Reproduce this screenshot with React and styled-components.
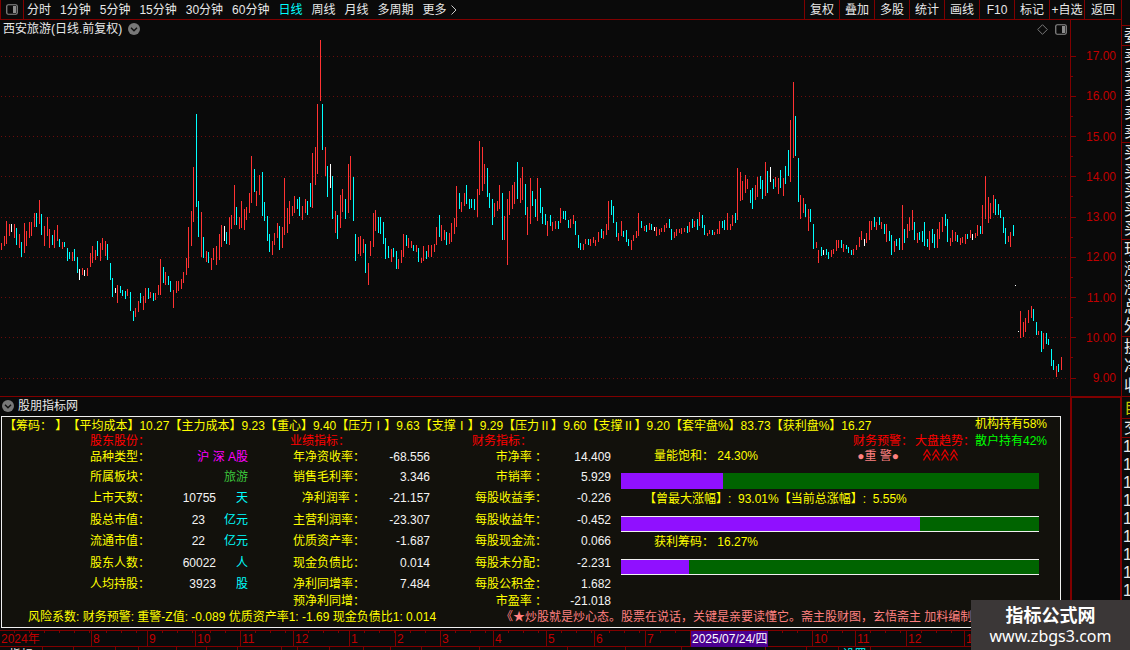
import styled, { createGlobalStyle } from "styled-components";

const GlobalStyle = createGlobalStyle`
  :root {
    --line: #800000;
    --bg: #0a0a0a;
    --up: #ff3232;
    --down: #00ffff;
    --label: #ffff00;
    --text: #e8e8e8;
  }

  * {
    box-sizing: border-box;
  }

  body {
    margin: 0;
    background: var(--bg);
    color: var(--text);
    font: 12px/16px "Liberation Sans", "Noto Sans CJK SC", sans-serif;
  }

  button {
    padding: 0;
    border: 0;
    background: none;
    color: inherit;
    font: inherit;
    white-space: nowrap;
    cursor: pointer;
  }
`;

const periods = ["分时", "1分钟", "5分钟", "15分钟", "30分钟", "60分钟", "日线", "周线", "月线", "多周期"];
const tools = ["复权", "叠加", "多股", "统计", "画线", "F10", "标记", "+自选", "返回"];

// x, high, low for every bar, grouped by colour
const upBars = [
  [1,243,250],[4,236,246],[6,221,244],[9,224,236],[14,224,238],[19,234,248],[24,223,253],[26,231,246],
  [29,222,238],[31,222,236],[34,213,227],[39,200,224],[44,226,246],[47,217,236],[49,229,248],[54,230,248],
  [57,225,241],[62,242,249],[72,252,261],[82,268,275],[87,268,276],[90,253,267],[92,246,263],[95,250,260],
  [100,243,261],[102,238,250],[105,241,256],[117,285,303],[127,289,296],[135,308,317],[138,301,312],
  [143,296,310],[145,288,303],[150,292,298],[155,293,300],[158,285,295],[160,259,295],[165,272,285],
  [173,290,308],[176,281,293],[178,281,291],[181,279,289],[183,272,283],[186,258,275],[188,227,268],
  [191,211,246],[193,167,222],[201,212,257],[206,251,262],[211,258,270],[213,248,260],[216,246,265],
  [219,234,260],[221,225,247],[229,217,245],[231,215,229],[234,185,225],[239,217,229],[241,201,228],
  [244,209,230],[246,207,220],[249,193,213],[251,156,203],[256,191,206],[259,175,195],[272,241,255],
  [274,233,245],[277,223,238],[282,227,248],[284,178,235],[287,208,233],[289,201,224],[292,206,216],
  [294,196,213],[302,206,220],[305,199,213],[312,153,208],[315,147,185],[317,104,174],[320,40,101],
  [325,147,176],[335,211,233],[340,195,228],[342,189,212],[348,164,213],[350,156,200],[358,237,254],
  [360,236,256],[363,239,253],[368,263,285],[370,241,256],[373,213,247],[375,210,231],[391,249,262],
  [398,259,269],[401,250,263],[403,234,257],[408,238,248],[411,241,248],[416,245,252],[421,258,263],
  [423,246,261],[428,245,257],[431,245,257],[434,244,252],[436,227,245],[441,225,241],[444,230,240],
  [449,233,244],[451,223,242],[454,218,234],[456,186,227],[461,202,212],[464,193,206],[477,189,217],
  [479,141,195],[482,147,191],[484,164,184],[494,203,217],[497,201,211],[499,185,209],[504,216,240],
  [507,199,265],[509,191,215],[512,185,209],[514,182,204],[520,178,203],[522,167,200],[527,207,235],
  [530,178,224],[537,178,221],[547,221,236],[552,222,231],[555,221,229],[560,208,223],[570,219,228],
  [573,215,224],[583,244,250],[585,239,244],[590,239,246],[593,237,243],[595,240,246],[598,232,242],
  [603,231,239],[606,224,235],[608,201,230],[618,233,241],[621,221,236],[631,240,250],[633,235,241],
  [636,231,238],[638,213,236],[644,226,231],[649,223,230],[656,227,236],[659,229,235],[661,228,232],
  [664,225,232],[666,223,228],[674,232,238],[676,229,236],[679,229,233],[681,228,234],[684,228,232],
  [689,222,232],[694,221,227],[699,212,226],[707,233,236],[709,230,234],[714,232,235],[717,229,234],
  [719,221,234],[727,213,230],[730,224,230],[732,215,226],[737,168,220],[740,172,201],[742,181,200],
  [745,175,193],[747,179,189],[755,185,200],[757,177,197],[765,162,196],[775,177,187],[778,178,194],
  [783,178,196],[790,120,182],[793,82,158],[800,195,219],[803,198,213],[808,209,231],[816,242,248],
  [818,250,263],[831,250,257],[833,249,254],[836,240,251],[838,240,248],[843,244,252],[853,249,255],
  [856,245,250],[859,237,247],[861,231,240],[866,233,243],[869,221,240],[871,221,230],[876,222,230],
  [881,222,229],[886,224,242],[894,241,252],[902,205,250],[907,224,238],[909,217,231],[912,210,230],
  [917,233,243],[929,231,250],[937,229,248],[939,222,239],[942,217,232],[950,238,246],[952,230,242],
  [955,232,241],[960,238,245],[962,237,243],[965,234,244],[970,230,238],[975,233,238],[977,225,236],
  [982,205,234],[985,176,219],[988,197,223],[990,203,219],[993,195,213],[1008,236,242],[1010,232,247],
  [1020,311,338],[1023,322,337],[1025,318,332],[1028,310,323],[1031,306,318],[1038,331,335],[1043,333,349],
  [1056,366,377],[1061,357,370],
];

const downBars = [
  [16,228,245],[21,242,257],[36,213,227],[41,214,235],[52,235,245],[59,239,247],[64,242,247],[67,248,261],
  [69,252,259],[74,249,261],[77,257,273],[97,241,256],[107,244,260],[110,263,280],[112,278,297],
  [120,286,293],[122,290,296],[125,291,299],[130,292,311],[133,311,321],[140,293,303],[148,288,299],
  [153,293,301],[163,267,283],[168,276,285],[170,281,292],[196,114,207],[198,201,237],[203,237,258],
  [208,252,263],[226,232,244],[236,207,225],[254,169,192],[262,172,216],[264,202,221],[267,216,241],
  [269,234,252],[279,226,250],[297,199,209],[299,197,216],[307,201,215],[310,183,207],[322,104,150],
  [327,166,197],[332,176,219],[337,215,239],[345,199,219],[353,177,221],[355,234,261],[365,244,273],
  [378,217,233],[380,217,234],[383,222,244],[385,238,259],[388,246,258],[393,248,257],[396,251,269],
  [406,235,246],[413,245,251],[418,248,262],[426,251,259],[439,215,237],[446,232,245],[459,193,209],
  [466,185,204],[469,199,209],[471,199,208],[474,199,210],[487,168,197],[489,193,208],[492,199,225],
  [502,193,240],[517,162,199],[525,184,215],[532,191,206],[535,199,217],[540,188,213],[542,207,224],
  [545,214,225],[550,215,226],[558,221,229],[563,211,219],[565,211,220],[568,220,228],[575,221,235],
  [578,235,248],[580,243,250],[588,239,245],[601,229,238],[611,200,215],[613,206,223],[616,222,237],
  [623,231,237],[626,230,242],[628,239,246],[641,221,228],[646,225,232],[651,224,230],[669,219,228],
  [671,229,240],[687,226,233],[692,219,228],[697,219,230],[702,215,228],[704,225,235],[712,230,235],
  [722,221,228],[724,220,230],[735,213,223],[750,190,203],[752,188,209],[760,176,189],[762,180,199],
  [767,171,193],[773,179,189],[780,170,188],[785,166,184],[788,150,176],[795,116,156],[798,158,202],
  [805,204,217],[810,209,222],[813,224,249],[821,247,256],[826,249,255],[828,252,259],[841,240,248],
  [846,245,249],[848,247,253],[851,250,255],[874,217,227],[879,217,225],[884,224,234],[889,231,241],
  [891,235,255],[896,239,246],[899,238,250],[904,229,243],[914,222,240],[919,232,240],[922,231,242],
  [924,222,246],[927,239,247],[932,229,243],[934,234,248],[945,214,226],[947,219,242],[957,235,242],
  [967,234,239],[980,226,234],[995,199,215],[998,204,215],[1000,210,218],[1003,217,233],[1005,228,244],
  [1013,225,236],[1033,309,321],[1036,322,335],[1041,331,352],[1046,333,344],[1048,339,345],[1051,349,366],
  [1053,360,370],[1058,364,372],
];

const flatBars = [
  [11,224,232],[79,269,280],[84,270,276],[115,288,293],[224,226,241],[330,164,188],[654,227,231],
  [770,167,182],[823,250,255],[864,239,246],[972,234,240],[1015,285,286],[1018,331,332],
];

const gridLines = [56, 96, 136, 176, 217, 257, 297, 337, 378];
const prices = ["17.00", "16.00", "15.00", "14.00", "13.00", "12.00", "11.00", "10.00", "9.00"];

const costs = [
  ["筹码： ", ""],
  ["平均成本", "10.27"],
  ["主力成本", "9.23"],
  ["重心", "9.40"],
  ["压力Ⅰ", "9.63"],
  ["支撑Ⅰ", "9.29"],
  ["压力Ⅱ", "9.60"],
  ["支撑Ⅱ", "9.20"],
  ["套牢盘%", "83.73"],
  ["获利盘%", "16.27"],
];

const rows = [
  { name: "品种类型：", word: "沪 深 A股", tone: "#ff00ff", perf: ["年净资收率：", "-68.556"], fin: ["市净率 ：", "14.409"] },
  { name: "所属板块：", word: "旅游", tone: "#3cc83c", perf: ["销售毛利率：", "3.346"], fin: ["市销率 ：", "5.929"] },
  { name: "上市天数：", value: "10755", unit: "天", perf: ["净利润率 ：", "-21.157"], fin: ["每股收益季：", "-0.226"] },
  { name: "股总市值：", value: "23", short: true, unit: "亿元", perf: ["主营利润率：", "-23.307"], fin: ["每股收益年：", "-0.452"] },
  { name: "流通市值：", value: "22", short: true, unit: "亿元", perf: ["优质资产率：", "-1.687"], fin: ["每股现金流：", "0.066"] },
  { name: "股东人数：", value: "60022", unit: "人", perf: ["现金负债比：", "0.014"], fin: ["每股未分配：", "-2.231"] },
  { name: "人均持股：", value: "3923", unit: "股", perf: ["净利同增率：", "7.484"], fin: ["每股公积金：", "1.682"] },
  { name: "", value: "", unit: "", perf: ["预净利同增：", ""], fin: ["市盈率 ：", "-21.018"] },
];

const months = [
  { label: "2024年", span: 91 },
  { label: "8", span: 56 },
  { label: "9", span: 48 },
  { label: "10", span: 45 },
  { label: "11", span: 53 },
  { label: "12", span: 56 },
  { label: "1", span: 46 },
  { label: "2", span: 45 },
  { label: "3", span: 53 },
  { label: "4", span: 53 },
  { label: "5", span: 48 },
  { label: "6", span: 51 },
  { label: "7", span: 45 },
  { label: "2025/07/24/四", span: 78, current: true },
  { label: "", span: 44, open: true },
  { label: "10", span: 43 },
  { label: "11", span: 51 },
  { label: "12", span: 58 },
  { label: "1", span: 106 },
];

const tabs = [
  { label: "指标", span: 43 },
  { span: 31 },
  { span: 42 },
  { span: 23 },
  { span: 38 },
  { span: 30 },
  { span: 31 },
  { span: 44 },
  { span: 16 },
  { span: 32 },
  { span: 34 },
  { span: 27 },
  { span: 31 },
  { span: 58 },
  { span: 88 },
  { span: 58 },
  { span: 56 },
  { span: 84 },
  { span: 41 },
  { span: 32 },
  { label: "设置", span: 32, active: true },
  { span: 199 },
];

const quoteGroups = [
  { items: [""], height: 26 },
  { items: ["委"], height: 20 },
  { items: ["卖", "卖", "卖", "卖", "卖"], height: 97 },
  { items: ["买", "买", "买", "买", "买"], height: 97 },
  { items: ["现", "涨", "涨", "总", "外"], height: 97 },
  { items: ["换", "净", "收"], height: 60 },
  { items: ["自"], height: 22, tone: "#c8c800" },
  { items: ["交"], height: 19 },
];

const Page = styled.div`
  display: grid;
  grid-template-columns: minmax(0, 1fr) 9px;
  min-height: 100vh;
  overflow: hidden;
`;

const Main = styled.main`
  display: flex;
  flex-direction: column;
  min-width: 0;
`;

const TopBar = styled.nav`
  display: flex;
  height: 20px;
  border-bottom: 1px solid var(--line);
`;

const LayoutButton = styled.button`
  display: flex;
  align-items: center;
  justify-content: center;
  width: 24px;
  border: solid var(--line);
  border-width: 0 1px;
`;

const Periods = styled.div`
  display: flex;
  flex: 1;
  gap: 9px;
  padding-left: 3px;
`;

const PeriodButton = styled.button`
  display: flex;
  align-items: center;
  color: ${({ $active }) => ($active ? "var(--down)" : "inherit")};
`;

const ToolButton = styled.button`
  width: 35px;
  border-left: 1px solid var(--line);

  &:last-child {
    width: 37px;
  }
`;

const ChartRow = styled.div`
  display: grid;
  grid-template-columns: minmax(0, 1fr) 51px;
`;

const TitleRow = styled.div`
  display: flex;
  align-items: center;
  gap: 6px;
  height: 18px;
  padding: 0 3px;
`;

const TitleTools = styled.div`
  display: flex;
  align-items: center;
  gap: 7px;
  margin-left: auto;
`;

const IconButton = styled.button`
  display: flex;
`;

const Plot = styled.svg`
  display: block;
  width: 100%;
  height: 358px;
`;

const PriceAxis = styled.div`
  display: flex;
  flex-direction: column;
  justify-content: space-between;
  padding: 28px 0 10px;
  border-left: 1px solid var(--line);
  color: #c00000;
`;

const PriceMark = styled.div`
  display: flex;
  align-items: center;
  height: 16px;
  padding-right: 5px;

  &::before {
    content: "";
    width: ${({ $half }) => ($half ? "2px" : "5px")};
    height: 1px;
    background: var(--line);
  }

  > span {
    margin-left: auto;
  }
`;

const IndicatorRow = styled(ChartRow)`
  flex: 1;
`;

const Indicator = styled.section`
  display: flex;
  flex-direction: column;
  min-width: 0;
  border-top: 1px solid var(--line);
`;

const IndicatorTitle = styled(TitleRow)`
  gap: 4px;
  height: 19px;
  padding: 0 2px 2px;
`;

const EmptyBox = styled.div`
  border: solid var(--line);
  border-width: 2px 1px 0 2px;
`;

const Panel = styled.div`
  margin: 0 9px 2px 1px;
  border: 1px solid #f0f0f0;
  background: #12110c;
  color: var(--label);
`;

const PanelHead = styled.div`
  display: flex;
  height: 16px;
  padding: 0 13px 0 2px;
  line-height: 19px;
  white-space: pre;
`;

const Holders = styled.span`
  margin-left: auto;
  line-height: 14px;
`;

const PanelBody = styled.div`
  display: flex;
`;

const Finance = styled.table`
  flex: none;
  width: 609px;
  table-layout: fixed;
  border-collapse: collapse;
  text-align: right;
  white-space: nowrap;

  th,
  td {
    height: 21px;
    padding: 0;
    font-weight: normal;
    line-height: 13px;
  }

  thead tr > * {
    height: 15px;
    color: #ff0000;
    vertical-align: bottom;
  }

  thead td ~ th {
    padding-right: 15px;
  }

  tbody tr:nth-child(even) > * {
    height: 22px;
  }

  tbody tr:first-child > * {
    height: 18px;
  }

  tbody tr:last-child > * {
    height: 13px;
  }
`;

const Value = styled.td`
  color: #f4f4f4;

  && {
    padding-right: ${({ $short }) => ($short ? "11px" : "0")};
  }
`;

const Unit = styled.td`
  color: ${({ $tone }) => $tone || "var(--down)"};
`;

const Gauges = styled.div`
  flex: 1;
  min-width: 0;
  padding: 0 21px 0 10px;
`;

const Alerts = styled.div`
  display: flex;
  justify-content: flex-end;
  gap: 2px;
  height: 14px;
  margin-right: -8px;
  color: #ff0000;
  white-space: nowrap;
`;

const Retail = styled.span`
  margin-left: -2px;
  color: #00ff00;
`;

const GaugeLabel = styled.div`
  display: flex;
  height: 16px;
  padding-left: ${({ $wide }) => ($wide ? "23px" : "33px")};
  line-height: 18px;
  white-space: pre;
`;

const Warning = styled.span`
  margin-left: auto;
  color: #ff8080;
`;

const Trend = styled.svg`
  flex: none;
  margin: 2px 80px 0 24px;
`;

const Bar = styled.div`
  height: 16px;
  margin: 10px 0 1px;
  border: solid #f0f0f0;
  border-width: ${({ $framed }) => ($framed ? "1px 0" : "0")};
  background: #006400;
`;

const BarFill = styled.div`
  height: 100%;
  background: #9010ff;
`;

const PanelFoot = styled.div`
  display: flex;
  height: 19px;
  padding-left: 26px;
  overflow: hidden;
  line-height: 18px;
  white-space: nowrap;
`;

const Risk = styled.span`
  flex: 0 0 473px;
`;

const Slogan = styled.span`
  color: #ff8080;
`;

const TimeAxis = styled.div`
  display: grid;
  grid-template-columns: ${months.map(({ span }) => `minmax(0, ${span}fr)`).join(" ")};
  height: 17px;
  border: solid var(--line);
  border-width: 1px 0;
  color: #c00000;
  line-height: 16px;
`;

const Month = styled.div`
  padding-left: 1px;
  border-left: ${({ $open }) => ($open ? "0" : "1px solid var(--line)")};
  background: ${({ $current }) =>
    $current
      ? "#4b0090"
      : "repeating-linear-gradient(to right, transparent 0 14px, var(--line) 14px 15px) top / 100% 2px no-repeat"};
  color: ${({ $current }) => ($current ? "#ffffff" : "inherit")};
  white-space: nowrap;

  &:first-child {
    border-left: 0;
  }
`;

const TabStrip = styled.div`
  display: grid;
  grid-template-columns: ${tabs.map(({ span }) => `minmax(0, ${span}fr)`).join(" ")};
  height: 3px;
  overflow: hidden;
`;

const Tab = styled.button`
  height: 16px;
  border-right: 1px solid var(--line);
  color: ${({ $active }) => ($active ? "var(--down)" : "inherit")};
  line-height: 14px;
`;

const Quotes = styled.aside`
  overflow: hidden;
  border-left: 1px solid var(--line);
  font-size: 16px;
`;

const QuoteGroup = styled.div`
  display: flex;
  flex-direction: column;
  justify-content: space-around;
  height: ${({ $height }) => $height}px;
  padding-left: 2px;
  border-bottom: 1px solid var(--line);
  color: ${({ $tone }) => $tone || "inherit"};
`;

const Ticks = styled.div`
  padding-left: 1px;
  line-height: 18px;
`;

const Watermark = styled.a`
  position: absolute;
  right: 0;
  bottom: 0;
  width: 159px;
  height: 50px;
  padding-top: 3px;
  background: #3b3737;
  color: #ffffff;
  font: 16px/20px "Noto Sans", sans-serif;
  text-align: center;
  text-decoration: none;

  > strong {
    display: block;
    font: bold 18px/23px "Noto Sans CJK SC", sans-serif;
  }
`;

const toPath = (bars) => bars.map(([x, high, low]) => `M${x + 0.5} ${high}V${low}`).join("");

const SplitIcon = () => (
  <svg width="12" height="11" viewBox="0 0 12 11" aria-hidden="true">
    <rect x=".75" y=".75" width="10.5" height="9.5" rx="1.5" fill="none" stroke="#8c8c8c" strokeWidth="1.2" />
    <rect x="7" y="2" width="3" height="7" fill="#8c8c8c" />
  </svg>
);

const RoundChevron = ({ label }) => (
  <IconButton aria-label={label}>
    <svg width="12" height="12" viewBox="0 0 12 12">
      <circle cx="6" cy="6" r="6" fill="#787878" />
      <path d="M3 4.7 6 7.7 9 4.7" fill="none" stroke="#101010" strokeWidth="1.4" />
    </svg>
  </IconButton>
);

const Gauge = ({ percent, framed, wide, label, children }) => (
  <>
    <GaugeLabel $wide={wide}>
      {label}
      {children}
    </GaugeLabel>
    <Bar $framed={framed}>
      <BarFill style={{ width: `${percent}%` }} />
    </Bar>
  </>
);

const Header = () => (
  <TopBar>
    <LayoutButton aria-label="布局">
      <SplitIcon />
    </LayoutButton>
    <Periods>
      {periods.map((name) => (
        <PeriodButton key={name} $active={name === "日线"}>
          {name}
        </PeriodButton>
      ))}
      <PeriodButton>
        更多
        <svg width="12" height="10" viewBox="0 0 12 10" aria-hidden="true">
          <path d="M4.5.5 9 5 4.5 9.5" fill="none" stroke="#c8c8c8" />
        </svg>
      </PeriodButton>
    </Periods>
    {tools.map((name) => (
      <ToolButton key={name}>{name}</ToolButton>
    ))}
  </TopBar>
);

const Chart = () => (
  <ChartRow>
    <div>
      <TitleRow>
        <span>西安旅游(日线.前复权)</span>
        <RoundChevron label="股票菜单" />
        <TitleTools>
          <IconButton aria-label="标记点">
            <svg width="11" height="11" viewBox="0 0 11 11">
              <path d="M5.5.7 10.3 5.5 5.5 10.3.7 5.5Z" fill="none" stroke="#787878" />
            </svg>
          </IconButton>
          <IconButton aria-label="侧栏">
            <SplitIcon />
          </IconButton>
        </TitleTools>
      </TitleRow>
      <Plot viewBox="0 38 1070 358" preserveAspectRatio="none" shapeRendering="crispEdges">
        {gridLines.map((y) => (
          <line key={y} x1="1" x2="1066" y1={y + 0.5} y2={y + 0.5} stroke="#6c0c0c" strokeDasharray="1 3" />
        ))}
        <path d={toPath(upBars)} stroke="#ff3232" />
        <path d={toPath(downBars)} stroke="#00ffff" />
        <path d={toPath(flatBars)} stroke="#ffffff" />
      </Plot>
    </div>
    <PriceAxis>
      {prices.flatMap((price, i) => [
        i > 0 && <PriceMark key={`${price}-half`} $half />,
        <PriceMark key={price}>
          <span>{price}</span>
        </PriceMark>,
      ])}
    </PriceAxis>
  </ChartRow>
);

const FinanceTable = () => (
  <Finance>
    <colgroup>
      <col width="148" />
      <col width="66" />
      <col width="32" />
      <col width="117" />
      <col width="65" />
      <col width="117" />
      <col width="64" />
    </colgroup>
    <thead>
      <tr>
        <th>股东股份：</th>
        <td colSpan="2" />
        <th>业绩指标：</th>
        <td />
        <th>财务指标：</th>
        <td />
      </tr>
    </thead>
    <tbody>
      {rows.map(({ name, word, tone, value, short, unit, perf, fin }) => (
        <tr key={perf[0]}>
          <th scope="row">{name}</th>
          {word ? (
            <Unit colSpan="2" $tone={tone}>
              {word}
            </Unit>
          ) : (
            <>
              <Value $short={short}>{value}</Value>
              <Unit>{unit}</Unit>
            </>
          )}
          <th>{perf[0]}</th>
          <Value>{perf[1]}</Value>
          <th>{fin[0]}</th>
          <Value>{fin[1]}</Value>
        </tr>
      ))}
    </tbody>
  </Finance>
);

const IndicatorPanel = () => (
  <Panel>
    <PanelHead>
      {costs.map(([name, value]) => (
        <span key={name}>
          【{name}】{value}
        </span>
      ))}
      <Holders>机构持有58%</Holders>
    </PanelHead>
    <PanelBody>
      <FinanceTable />
      <Gauges>
        <Alerts>
          <span>财务预警：</span>
          <span>大盘趋势：</span>
          <Retail>散户持有42%</Retail>
        </Alerts>
        <Gauge percent={24.3} label="量能饱和： 24.30%">
          <Warning>●重 警●</Warning>
          <Trend width="36" height="12" viewBox="0 0 36 12" aria-hidden="true">
            {[0, 9, 18, 27].map((x) => (
              <path
                key={x}
                d={`M${x + 0.5} 6.5 ${x + 4} .8 ${x + 7.5} 6.5M${x + 0.5} 11.5 ${x + 4} 5.8 ${x + 7.5} 11.5`}
                fill="none"
                stroke="#e00000"
                strokeWidth="1.3"
              />
            ))}
          </Trend>
        </Gauge>
        <Gauge percent={71.5} framed wide label="【曾最大涨幅】:  93.01%【当前总涨幅】:  5.55%" />
        <Gauge percent={16.27} framed label="获利筹码： 16.27%" />
      </Gauges>
    </PanelBody>
    <PanelFoot>
      <Risk>风险系数: 财务预警: 重警-Z值: -0.089 优质资产率1: -1.69 现金负债比1: 0.014</Risk>
      <Slogan>《★炒股就是炒心态。股票在说话，关键是亲要读懂它。斋主股财图，玄悟斋主 加料编制</Slogan>
    </PanelFoot>
  </Panel>
);

export default function App() {
  return (
    <>
      <GlobalStyle />
      <Page>
        <Main>
          <Header />
          <Chart />
          <IndicatorRow>
            <Indicator>
              <IndicatorTitle>
                <RoundChevron label="指标菜单" />
                <span>股朋指标网</span>
              </IndicatorTitle>
              <IndicatorPanel />
              <TimeAxis>
                {months.map(({ label, current, open }, i) => (
                  <Month key={i} $current={current} $open={open}>
                    {label}
                  </Month>
                ))}
              </TimeAxis>
              <TabStrip>
                {tabs.map(({ label, active }, i) => (
                  <Tab key={i} $active={active}>
                    {label}
                  </Tab>
                ))}
              </TabStrip>
            </Indicator>
            <EmptyBox />
          </IndicatorRow>
        </Main>
        <Quotes>
          {quoteGroups.map(({ items, height, tone }, i) => (
            <QuoteGroup key={i} $height={height} $tone={tone}>
              {items.map((item, j) => (
                <span key={j}>{item}</span>
              ))}
            </QuoteGroup>
          ))}
          <Ticks>
            {Array.from({ length: 9 }, (_, i) => (
              <div key={i}>1</div>
            ))}
          </Ticks>
        </Quotes>
      </Page>
      <Watermark href="#">
        <strong>指标公式网</strong>
        www.zbgs3.com
      </Watermark>
    </>
  );
}
